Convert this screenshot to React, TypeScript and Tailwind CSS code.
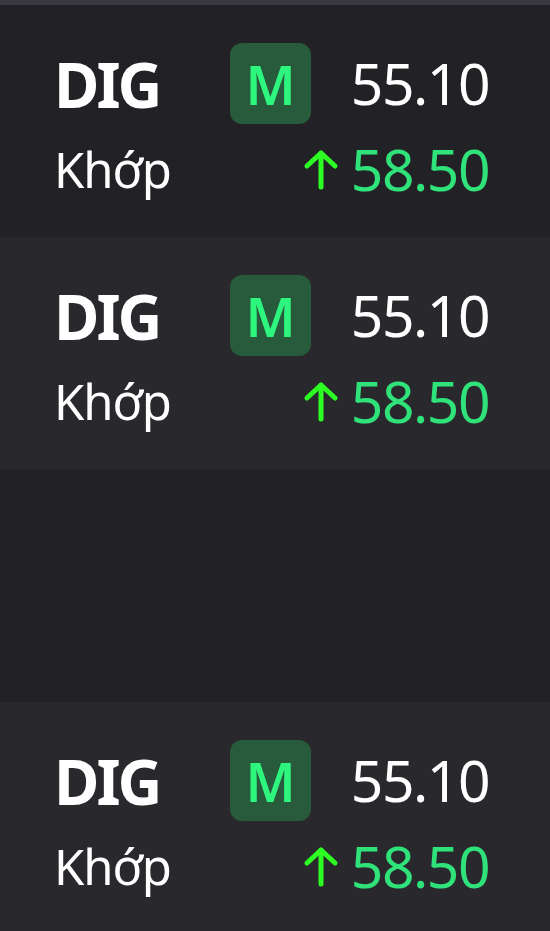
import React from "react";

type Quote = {
    symbol: string
    label: string
    ref: string
    last: string
}

const quotes: Quote[] = [
    { symbol: 'DIG', label: 'Khớp', ref: '55.10', last: '58.50' },
    { symbol: 'DIG', label: 'Khớp', ref: '55.10', last: '58.50' },
]

function ArrowUp() {
    return (
        <svg width="36" height="42" viewBox="0 0 36 42" fill="none" stroke="#2cff22" strokeWidth="5" strokeLinecap="round" strokeLinejoin="round">
            <path d="M18 4 L18 38" />
            <path d="M4 17 L18 4 L32 17" />
        </svg>
    )
}

function QuoteRow({ quote, className }: { quote: Quote, className: string }) {
    return (
        <div className={`flex flex-col h-[232px] shrink-0 pt-[38px] pl-[54px] pr-[61px] ${className}`}>
            <div className="flex items-center h-[81px]">
                <div className="w-[176px] text-[62px] font-bold leading-none tracking-[-3px] text-white">{quote.symbol}</div>
                <div className="w-[81px] h-[81px] rounded-[12px] bg-[#285a3c] flex items-center justify-center text-[54px] font-semibold leading-none text-[#2ef57e]">
                    M
                </div>
                <div className="ml-auto text-[57px] leading-none tracking-[-1.5px] text-white">{quote.ref}</div>
            </div>
            <div className="flex items-center h-[57px] mt-[17px]">
                <div className="text-[49px] leading-none tracking-[-1px] text-white">{quote.label}</div>
                <div className="ml-auto flex items-center gap-[12px]">
                    <ArrowUp />
                    <div className="text-[57px] leading-none tracking-[-1.5px] text-[#2fe27a]">{quote.last}</div>
                </div>
            </div>
        </div>
    )
}

export default function App() {
    return (
        <div className="w-[550px] h-[931px] overflow-hidden bg-[#222226] flex flex-col" style={{ fontFamily: '"Noto Sans", sans-serif' }}>
            <div className="h-[5px] shrink-0 bg-[#38383e]" />
            <QuoteRow quote={quotes[0]} className="bg-[#222226]" />
            <QuoteRow quote={quotes[1]} className="bg-[#28282d] h-[231px]" />
            <div className="h-[233px] shrink-0" />
            <QuoteRow quote={quotes[0]} className="bg-[#28282d]" />
        </div>
    )
}
